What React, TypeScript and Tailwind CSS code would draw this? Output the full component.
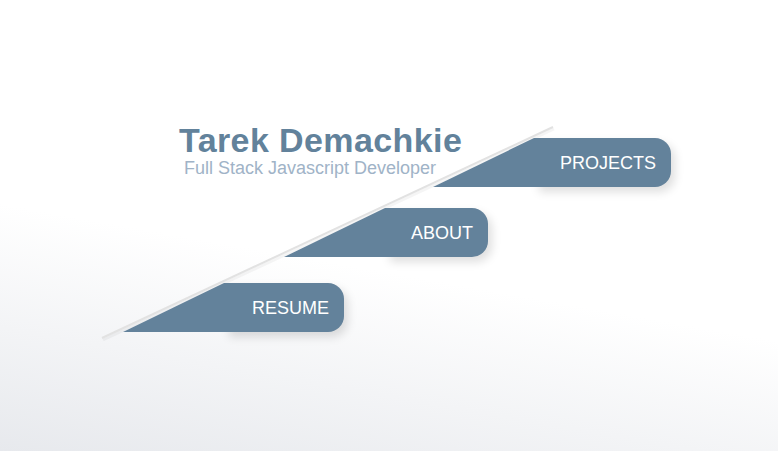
import React from 'react'

const font = { fontFamily: '"Liberation Sans", Arial, sans-serif' }

function NavTab({ label, width, className }: { label: string; width: string; className: string }) {
  return (
    <a href="#" className={`flex h-[49px] shrink-0 ${className}`}>
      <svg width="103" height="49" viewBox="0 0 103 49" className="relative z-10 block shrink-0">
        <polygon points="0,49 101,0 103,0 103,49" fill="#63829b" />
      </svg>
      <div
        className={`-ml-px flex h-full items-center justify-end rounded-r-[16px] bg-[#63829b] pr-[15px] text-[18px] leading-[18px] text-white shadow-[4px_5px_10px_rgba(0,0,0,0.13)] ${width}`}
      >
        {label}
      </div>
    </a>
  )
}

export default function App() {
  return (
    <main
      className="relative h-screen w-full overflow-hidden bg-[linear-gradient(190deg,#ffffff_58%,#e7e9ed_100%)] pt-[124px]"
      style={font}
    >
      <svg className="pointer-events-none absolute inset-0 h-full w-full" viewBox="0 0 778 451">
        <line x1="103" y1="340" x2="554" y2="129" stroke="#000" strokeOpacity="0.04" strokeWidth="3" />
        <line x1="102" y1="338" x2="553" y2="127" stroke="#e2e2e2" strokeWidth="2" />
      </svg>

      <div className="relative flex items-start">
        <div className="ml-[179px] w-[254px] shrink-0 whitespace-nowrap">
          <h1 className="text-[34px] font-bold leading-[33px] tracking-[0.4px] text-[#62829b]">Tarek Demachkie</h1>
          <p className="ml-[5px] mt-[2px] text-[18px] leading-[18px] text-[#a0b3c7]">Full Stack Javascript Developer</p>
        </div>
        <NavTab label="PROJECTS" width="w-[136px]" className="mt-[14px]" />
      </div>

      <div className="relative mt-[21px] flex">
        <NavTab label="ABOUT" width="w-[102px]" className="ml-[284px]" />
      </div>

      <div className="relative mt-[26px] flex">
        <NavTab label="RESUME" width="w-[119px]" className="ml-[123px]" />
      </div>
    </main>
  )
}
